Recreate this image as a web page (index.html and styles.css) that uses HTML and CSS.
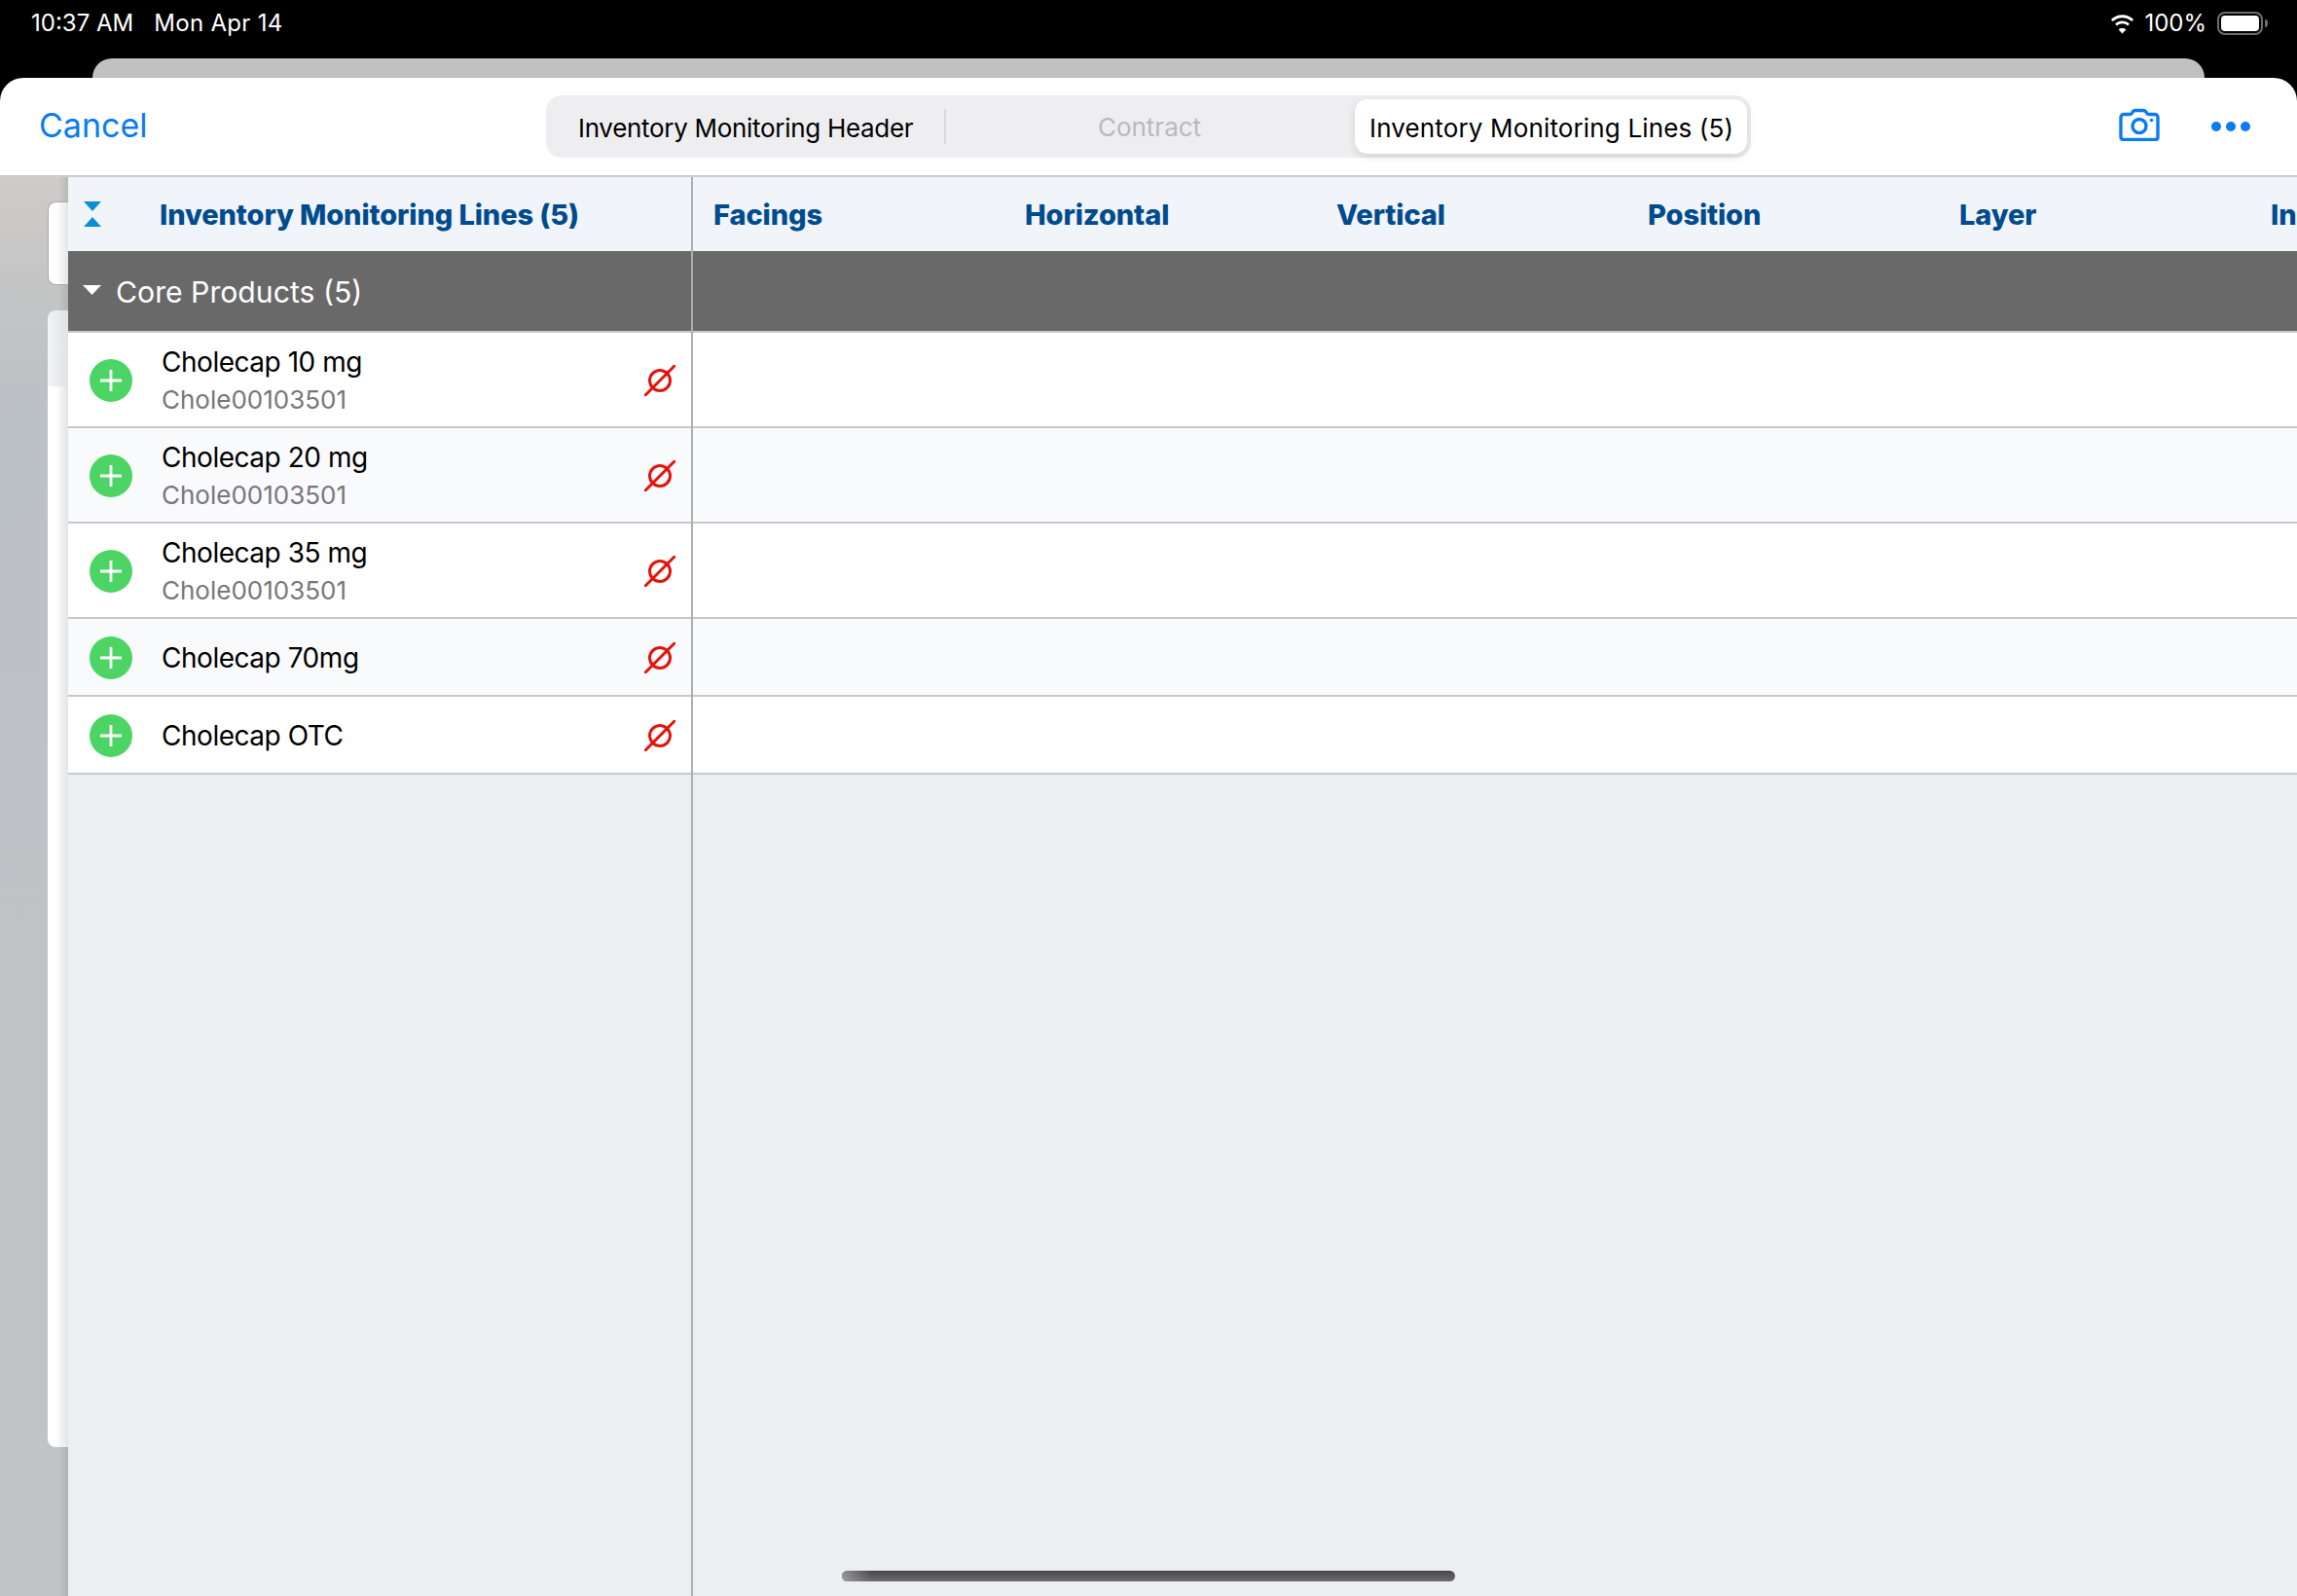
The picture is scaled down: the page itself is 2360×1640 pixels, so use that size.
FILE: index.html
```html
<!DOCTYPE html>
<html lang="en">
<head>
<meta charset="utf-8">
<title>Inventory Monitoring Lines</title>
<link rel="stylesheet" href="styles.css">
</head>
<body>
<div class="screen">
  <header class="statusbar">
    <div class="status-left"><span>10:37 AM</span><span class="date">Mon Apr 14</span></div>
    <div class="status-right">
      <svg class="wifi" viewBox="0 0 27 21"><path d="M13.5 4.2c3.7 0 7.1 1.4 9.7 3.8l1.9-2C22 3.1 17.9 1.3 13.5 1.3S5 3.1 1.900 6l1.900 2c2.600-2.400 6-3.800 9.700-3.800z"/><path d="M13.500 10.300c2.100 0 4 .8 5.500 2.100l1.900-2c-2-1.800-4.600-2.900-7.400-2.900s-5.400 1.100-7.400 2.900l1.900 2c1.500-1.300 3.400-2.100 5.500-2.100z"/><path d="M13.500 20.500l3.800-4c-1-.9-2.300-1.400-3.800-1.400s-2.800.5-3.800 1.400z"/></svg>
      <span>100%</span>
      <div class="battery"><div class="battery-fill"></div></div>
    </div>
  </header>
  <div class="back-sheet"></div>
  <main class="sheet">
    <nav class="navbar">
      <a class="cancel">Cancel</a>
      <div class="segments">
        <div class="segment seg-header">Inventory Monitoring Header</div>
        <div class="segment seg-contract">Contract</div>
        <div class="segment seg-lines">Inventory Monitoring Lines (5)</div>
      </div>
      <div class="nav-actions">
        <svg class="camera" viewBox="0 0 42 34"><path d="M5 6.500h6.200c.9 0 1.500-.4 2-1.100l1-1.500c.6-.9 1.300-1.400 2.500-1.400h8.600c1.200 0 1.900.5 2.500 1.400l1 1.500c.5.700 1.100 1.100 2 1.100H37c1.700 0 3 1.300 3 3v20.500c0 1.700-1.300 2.500-3 2.500H5c-1.700 0-3-.8-3-2.500V9.500c0-1.700 1.300-3 3-3z"/><circle cx="21" cy="18.500" r="7"/><circle class="cam-dot" cx="33.500" cy="12.500" r="1.800"/></svg>
        <div class="dots"><i></i><i></i><i></i></div>
      </div>
    </nav>
    <div class="content">
      <aside class="gutter">
        <div class="card card-small"></div>
        <div class="card card-large"></div>
      </aside>
      <section class="table">
        <div class="pane pane-fixed">
          <div class="head-cell">
            <svg class="sort" viewBox="0 0 18 26"><path d="M0 0h18l-9 10z"/><path d="M9 16l9 10H0z"/></svg>
            <span>Inventory Monitoring Lines (5)</span>
          </div>
          <div class="group-row"><svg class="caret" viewBox="0 0 19 10"><path d="M0 0h19l-9.500 10z"/></svg><span>Core Products (5)</span></div>
          <div class="row tall">
            <svg class="plus" viewBox="0 0 44 44"><circle cx="22" cy="22" r="22"/><path d="M22 11v22M11 22h22"/></svg>
            <div class="names"><div class="name">Cholecap 10 mg</div><div class="code">Chole00103501</div></div>
            <svg class="null" viewBox="0 0 32 32"><circle cx="16" cy="16" r="10.500"/><path d="M1 31L31 1"/></svg>
          </div>
          <div class="row tall alt">
            <svg class="plus" viewBox="0 0 44 44"><circle cx="22" cy="22" r="22"/><path d="M22 11v22M11 22h22"/></svg>
            <div class="names"><div class="name">Cholecap 20 mg</div><div class="code">Chole00103501</div></div>
            <svg class="null" viewBox="0 0 32 32"><circle cx="16" cy="16" r="10.500"/><path d="M1 31L31 1"/></svg>
          </div>
          <div class="row tall">
            <svg class="plus" viewBox="0 0 44 44"><circle cx="22" cy="22" r="22"/><path d="M22 11v22M11 22h22"/></svg>
            <div class="names"><div class="name">Cholecap 35 mg</div><div class="code">Chole00103501</div></div>
            <svg class="null" viewBox="0 0 32 32"><circle cx="16" cy="16" r="10.500"/><path d="M1 31L31 1"/></svg>
          </div>
          <div class="row short alt">
            <svg class="plus" viewBox="0 0 44 44"><circle cx="22" cy="22" r="22"/><path d="M22 11v22M11 22h22"/></svg>
            <div class="names"><div class="name">Cholecap 70mg</div></div>
            <svg class="null" viewBox="0 0 32 32"><circle cx="16" cy="16" r="10.500"/><path d="M1 31L31 1"/></svg>
          </div>
          <div class="row short">
            <svg class="plus" viewBox="0 0 44 44"><circle cx="22" cy="22" r="22"/><path d="M22 11v22M11 22h22"/></svg>
            <div class="names"><div class="name">Cholecap OTC</div></div>
            <svg class="null" viewBox="0 0 32 32"><circle cx="16" cy="16" r="10.500"/><path d="M1 31L31 1"/></svg>
          </div>
        </div>
        <div class="pane pane-scroll">
          <div class="head-cols">
            <span>Facings</span><span>Horizontal</span><span>Vertical</span><span>Position</span><span>Layer</span><span>In</span>
          </div>
          <div class="group-row"></div>
          <div class="row tall"></div>
          <div class="row tall alt"></div>
          <div class="row tall"></div>
          <div class="row short alt"></div>
          <div class="row short"></div>
        </div>
      </section>
    </div>
    <div class="home-indicator"></div>
  </main>
</div>
</body>
</html>
```
FILE: styles.css
```css
* { box-sizing: border-box; }
html, body { margin: 0; padding: 0; height: 100%; }
body { background: #000; font-family: Inter, "Liberation Sans", sans-serif; overflow: hidden; }
.screen { width: 2360px; height: 1640px; display: flex; flex-direction: column; background: #000; overflow: hidden; }

.statusbar { height: 60px; flex: none; display: flex; justify-content: space-between; align-items: flex-start; padding: 9px 35px 0 32px; color: #fff; font-size: 24px; line-height: 30px; }
.status-left { display: flex; gap: 21px; }
.date { letter-spacing: .3px; }
.status-right { display: flex; align-items: center; gap: 9px; }
.wifi { width: 27px; height: 21px; fill: #fff; }
.battery { width: 47px; height: 24px; border: 2px solid #6d6d6d; border-radius: 8px; padding: 2px; position: relative; margin-left: 2px; }
.battery::after { content: ""; position: absolute; right: -7px; top: 6px; width: 3px; height: 8px; background: #6d6d6d; border-radius: 0 3px 3px 0; }
.battery-fill { width: 100%; height: 100%; background: #fff; border-radius: 4px; }

.back-sheet { height: 20px; flex: none; margin: 0 95px; background: #c1c1c1; border-radius: 22px 22px 0 0; }

.sheet { flex: 1; display: flex; flex-direction: column; background: #fff; border-radius: 24px 24px 0 0; overflow: hidden; position: relative; min-height: 0; }

.navbar { height: 102px; flex: none; display: flex; align-items: center; padding: 0 48px 0 40px; border-bottom: 2px solid #cbced1; }
.cancel { color: #0a7cf2; font-size: 34px; line-height: 44px; width: 521px; flex: none; margin-top: -2px; }
.segments { display: flex; align-items: center; width: 1238px; height: 64px; background: #eeeef0; border-radius: 16px; padding: 0 4px; flex: none; }
.segment { font-size: 26px; line-height: 58px; color: #000; white-space: nowrap; padding-top: 1px; }
.seg-header { width: 407px; height: 36px; line-height: 36px; padding: 2px 0 0 29px; border-right: 2px solid #d9d9dc; letter-spacing: -.3px; }
.seg-contract { width: 418px; text-align: center; color: #b9b9bd; }
.seg-lines { width: 403px; height: 56px; margin-left: 2px; background: #fff; border-radius: 13px; padding-left: 15px; box-shadow: 0 3px 8px rgba(0,0,0,.12); letter-spacing: .15px; }
.nav-actions { display: flex; align-items: center; justify-content: flex-end; gap: 53px; flex: 1; }
.camera { width: 42px; height: 34px; fill: none; stroke: #0a7cf2; stroke-width: 3.400; margin-top: -4px; }
.cam-dot { fill: #0a7cf2; stroke: none; }
.dots { display: flex; gap: 5px; }
.dots i { width: 10px; height: 10px; background: #0a7cf2; border-radius: 50%; display: block; }

.content { flex: 1; display: flex; min-height: 0; }
.gutter { width: 70px; flex: none; padding: 25px 0 0 49px; display: flex; flex-direction: column; gap: 26px; background: linear-gradient(90deg, rgba(0,0,0,0) 60px, rgba(0,0,0,.09) 70px), linear-gradient(180deg, #cecbc9 0, #c3c4c5 130px, #bcc1c5 240px, #c1c4c6 1400px); }
.card { width: 21px; background: linear-gradient(90deg, #fff 0, #fff 8px, #e2e3e5 21px); border-radius: 8px 0 0 8px; }
.card-small { height: 86px; border: solid #aaa9a8; border-width: 1px 0 1px 1px; }
.card-large { height: 1168px; background: linear-gradient(90deg, #f1f4f7 0, #dfe3e6 21px) 0 0 / 100% 78px no-repeat, linear-gradient(90deg, #fff 0, #fff 8px, #e2e3e5 21px); }

.table { flex: 1; display: flex; min-width: 0; background: #ebeff2; overflow: hidden; }
.pane-fixed { width: 642px; flex: none; border-right: 2px solid #adb0b3; }
.pane-scroll { flex: 1; min-width: 0; overflow: hidden; }

.head-cell, .head-cols { height: 76px; background: #f1f5f9; color: #004b8f; font-size: 29px; font-weight: 800; letter-spacing: -.1px; white-space: nowrap; }
.head-cell { display: flex; align-items: center; padding: 0 0 0 16px; }
.head-cell span { margin-left: 60px; }
.sort { width: 18px; height: 26px; fill: #0a8fd6; flex: none; }
.head-cols { display: flex; align-items: center; padding-left: 21px; }
.head-cols span { flex: 0 0 320px; }

.group-row { height: 84px; background: #696969; border-bottom: 2px solid #c9c9cb; display: flex; align-items: center; padding: 2px 0 0 15px; color: #fff; font-size: 30.2px; }
.caret { width: 19px; height: 10px; fill: #fff; margin: -4px 15px 0 0; flex: none; }

.row { background: #fff; border-bottom: 2px solid #c9c9cb; display: flex; align-items: center; padding-top: 2px; }
.row.alt { background: #f9fafc; }
.tall { height: 98px; }
.short { height: 80px; }
.pane-fixed .row { padding-left: 22px; padding-right: 16px; }
.plus { width: 44px; height: 44px; flex: none; }
.plus circle { fill: #4cd564; }
.plus path { stroke: #fff; stroke-width: 2.800; fill: none; }
.names { flex: 1; margin-left: 30px; min-width: 0; }
.name { font-size: 28px; line-height: 36px; color: #000; letter-spacing: -.47px; }
.code { font-size: 26px; line-height: 34px; color: #77777b; margin-top: 4px; }
.null { width: 32px; height: 32px; flex: none; fill: none; stroke: #e2140c; stroke-width: 3; stroke-linecap: round; }

.home-indicator { position: absolute; left: 865px; top: 1534px; width: 630px; height: 11px; border-radius: 6px; background: linear-gradient(180deg, #47474a, #6c6c6e); }
.home-indicator::before { content: ""; position: absolute; left: 0; top: 0; width: 30px; height: 100%; border-radius: 6px 0 0 6px; background: linear-gradient(90deg, rgba(170,170,172,.75), rgba(170,170,172,0)); }
```
